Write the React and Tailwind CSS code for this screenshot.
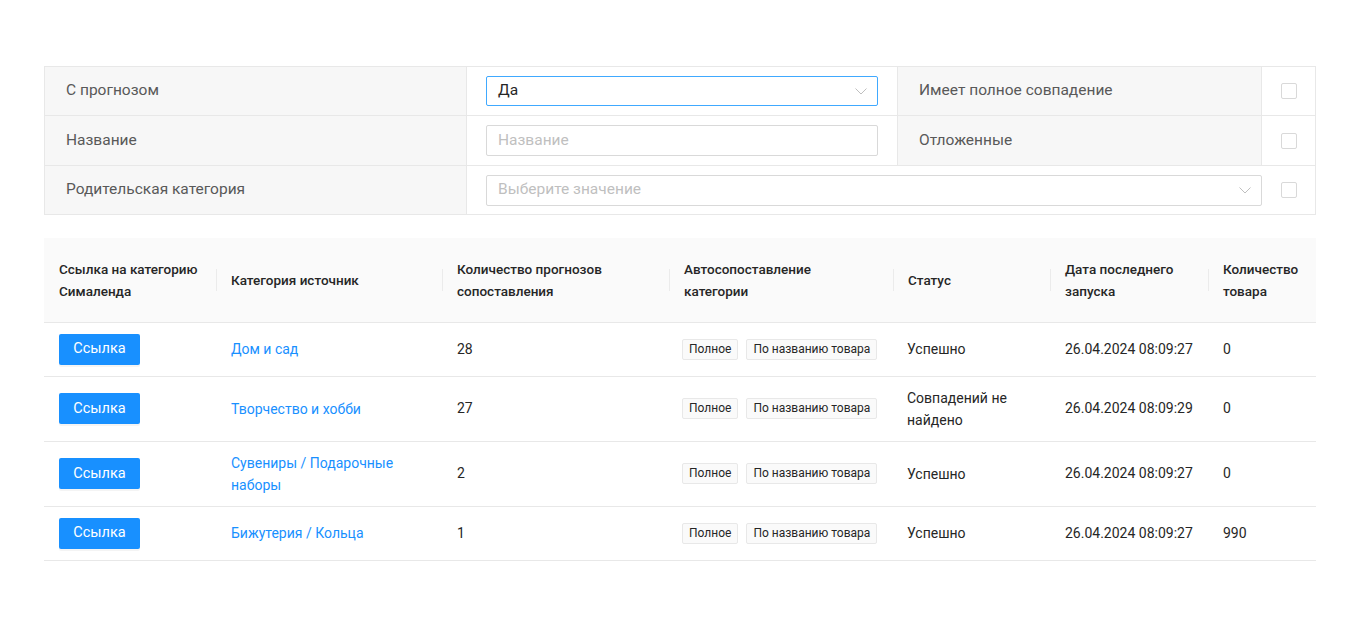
const rows = [
  { cat: 'Дом и сад', count: 28, status: 'Успешно', date: '26.04.2024 08:09:27', goods: '0' },
  { cat: 'Творчество и хобби', count: 27, status: 'Совпадений не найдено', date: '26.04.2024 08:09:29', goods: '0' },
  { cat: 'Сувениры / Подарочные наборы', count: 2, status: 'Успешно', date: '26.04.2024 08:09:27', goods: '0' },
  { cat: 'Бижутерия / Кольца', count: 1, status: 'Успешно', date: '26.04.2024 08:09:27', goods: '990' },
];

const heads = [
  ['Ссылка на категорию Сималенда', 'w-[172px] pr-[8px]'],
  ['Категория источник', 'w-[226px] pr-[15px]'],
  ['Количество прогнозов сопоставления', 'w-[227px] pr-[15px]'],
  ['Автосопоставление категории', 'w-[224px] pr-[15px]'],
  ['Статус', 'w-[157px] pr-[15px]'],
  ['Дата последнего запуска', 'w-[158px] pr-[15px]'],
  ['Количество товара', 'pr-[8px]'],
];

const Chevron = () => (
  <svg width="12" height="7" viewBox="0 0 12 7" fill="none" className="text-[#bfbfbf]">
    <path d="M0.5 0.5 L6 6 L11.5 0.5" stroke="currentColor" strokeWidth="1" />
  </svg>
);

const Check = () => <span className="block w-4 h-4 border border-[#d9d9d9] rounded-[2px] bg-white" />;
const Tag = ({ children }) => (
  <span className="inline-block whitespace-nowrap h-[21px] leading-[19px] px-[6px] text-[12px] text-[#262626] bg-[#fafafa] border border-[#e8e8e8] rounded-[2px]">{children}</span>
);

const label = 'bg-[#f7f7f7] px-[21px] text-[15.5px] text-[#595959] border-r border-[#e8e8e8]';

export default function App() {
  return (
    <div className="min-h-screen bg-white pt-[66px] px-[44px] font-['Roboto',sans-serif]">
      <table className="w-full table-fixed border-collapse border border-[#e8e8e8]">
        <colgroup>
          <col className="w-[422px]" /><col className="w-[431px]" /><col className="w-[364px]" /><col />
        </colgroup>
        <tbody>
          <tr className="h-[49px] border-b border-[#e8e8e8]">
            <td className={label}>С прогнозом</td>
            <td className="px-[19px]">
              <div className="flex items-center justify-between h-[30px] border border-[#40a9ff] rounded-[2px] pl-[11px] pr-[10px] text-[15.5px] text-[#262626]">
                Да <Chevron />
              </div>
            </td>
            <td className={label + ' border-l'}>Имеет полное совпадение</td>
            <td><div className="flex justify-center"><Check /></div></td>
          </tr>
          <tr className="h-[50px] border-b border-[#e8e8e8]">
            <td className={label}>Название</td>
            <td className="px-[19px]">
              <div className="flex items-center h-[31px] border border-[#d9d9d9] rounded-[2px] px-[11px] text-[15.5px] text-[#bfbfbf]">Название</div>
            </td>
            <td className={label + ' border-l'}>Отложенные</td>
            <td><div className="flex justify-center"><Check /></div></td>
          </tr>
          <tr className="h-[49px]">
            <td className={label}>Родительская категория</td>
            <td colSpan={3} className="pl-[19px] pr-[18px]">
              <div className="flex items-center gap-[19px]">
                <div className="flex-1 flex items-center justify-between h-[31px] border border-[#d9d9d9] rounded-[2px] pl-[11px] pr-[10px] text-[15.5px] text-[#bfbfbf]">
                  Выберите значение <Chevron />
                </div>
                <Check />
              </div>
            </td>
          </tr>
        </tbody>
      </table>

      <table className="w-full table-fixed border-collapse mt-[23px] text-[14px] text-[#262626]">
        <thead>
          <tr className="h-[84px] bg-[#fafafa] border-b border-[#e8e8e8]">
            {heads.map(([h, w], i) => (
              <th key={h} className={`${w} relative pl-[15px] text-left font-medium text-[13.5px] leading-[22px] text-[#262626]`}>
                {i > 0 && <span className="absolute left-0 top-1/2 -translate-y-1/2 h-[22px] w-px bg-[#ebebeb]" />}
                {h}
              </th>
            ))}
          </tr>
        </thead>
        <tbody>
          {rows.map(r => {
            const tall = r.cat.length > 22 || r.status.length > 12;
            return (
              <tr key={r.cat} className={`${tall ? 'h-[65px]' : 'h-[54px]'} border-b border-[#e8e8e8]`}>
                <td className="px-[15px]">
                  <button className="h-[31px] w-[81px] bg-[#1890ff] text-white text-[14.5px] rounded-[2px] shadow-[0_2px_0_rgba(0,0,0,0.045)]">Ссылка</button>
                </td>
                <td className="px-[15px] text-[#1890ff] leading-[22px]">{r.cat}</td>
                <td className="px-[15px]">{r.count}</td>
                <td className="px-[13px]">
                  <div className="flex gap-[8px]"><Tag>Полное</Tag><Tag>По названию товара</Tag></div>
                </td>
                <td className="px-[14px] leading-[22px]">{r.status}</td>
                <td className="px-[15px]">{r.date}</td>
                <td className="px-[15px]">{r.goods}</td>
              </tr>
            );
          })}
        </tbody>
      </table>
    </div>
  );
}
